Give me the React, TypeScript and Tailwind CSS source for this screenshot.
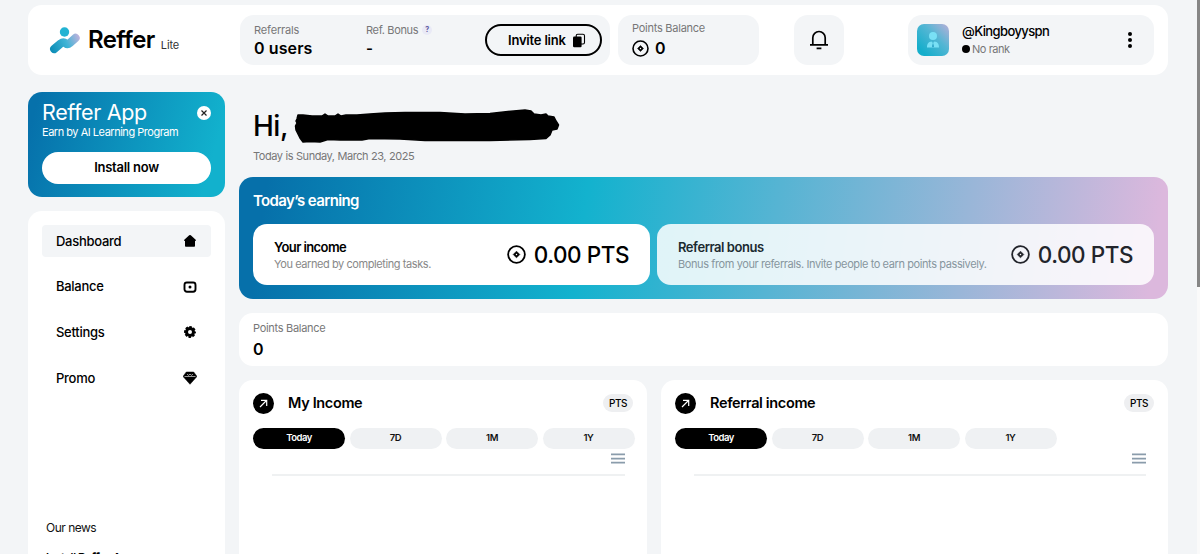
import React from 'react';

const menu = [
    { label: 'Dashboard', icon: 'home', active: true },
    { label: 'Balance', icon: 'balance', active: false },
    { label: 'Settings', icon: 'gear', active: false },
    { label: 'Promo', icon: 'gem', active: false },
];

const periods = ['Today', '7D', '1M', '1Y'];

function Logo() {
    return (
        <svg width="32" height="28" viewBox="0 0 32 28" fill="none">
            <defs>
                <linearGradient id="logo" x1="2" y1="22" x2="31" y2="8" gradientUnits="userSpaceOnUse">
                    <stop stopColor="#0f8fb8" />
                    <stop offset="0.5" stopColor="#3fb4d6" />
                    <stop offset="1" stopColor="#cdb2dd" />
                </linearGradient>
            </defs>
            <circle cx="15.500" cy="6" r="4.700" fill="#22b3d3" />
            <path d="M5.200 23l6.600-5.600c2-1.600 3.600-1.200 5 0 1.300 1 2.700.8 4.200-.5l5.600-5" stroke="url(#logo)" strokeWidth="8.200" strokeLinecap="round" strokeLinejoin="round" />
        </svg>
    );
}

function Coin({ size }: { size: number }) {
    return (
        <svg width={size} height={size} viewBox="0 0 20 20" fill="none" className="shrink-0">
            <circle cx="10" cy="10" r="8.800" stroke="currentColor" strokeWidth="1.900" />
            <path d="M10 6.500l3.500 3.500-3.500 3.500L6.500 10z" fill="currentColor" stroke="currentColor" strokeWidth="0.600" strokeLinejoin="round" />
            <circle cx="10" cy="10" r="0.800" fill="#fff" />
        </svg>
    );
}

function MenuIcon({ name }: { name: string }) {
    if (name === 'home') {
        return (
            <svg className="-mt-px" width="14" height="14" viewBox="0 0 14 14">
                <path d="M6.200 1.300a1.200 1.200 0 0 1 1.600 0l4.900 4.500c.5.500.2 1.200-.4 1.200H12v4.900c0 .5-.3.800-.8.800H2.800c-.5 0-.8-.3-.8-.8V7h-.3c-.6 0-.9-.7-.4-1.200z" />
            </svg>
        );
    }
    if (name === 'balance') {
        return (
            <svg width="14" height="14" viewBox="0 0 14 14" fill="none">
                <rect x="1.500" y="2.500" width="11" height="9.200" rx="2.400" stroke="#000" strokeWidth="1.900" />
                <circle cx="7" cy="7.100" r="1.500" fill="#000" />
            </svg>
        );
    }
    if (name === 'gear') {
        return (
            <svg className="-mt-px" width="14" height="14" viewBox="0 0 14 14" fill="none">
                <circle cx="7" cy="7" r="3.500" stroke="#000" strokeWidth="3" />
                <circle cx="7" cy="7" r="5" stroke="#000" strokeWidth="1.900" strokeDasharray="2.500 1.427" strokeDashoffset="1.250" />
            </svg>
        );
    }
    return (
        <svg className="-mt-px" width="14" height="14" viewBox="0 0 14 14" fill="none">
            <path d="M3.300 1h7.400L14 5.400 7 13.300 0 5.400z" fill="#000" stroke="#000" strokeWidth="0.500" strokeLinejoin="round" />
            <path d="M1.500 5.500h11M4 3.200l1.700 1.200L7 3l1.300 1.400L10 3.200" stroke="#fff" strokeWidth="0.600" />
        </svg>
    );
}

function ChartCard({ title, className }: { title: string; className: string }) {
    return (
        <div className={`h-[190px] rounded-t-[14px] bg-white px-[14px] pt-3 ${className}`}>
            <div className="flex h-[22px] items-center">
                <div className="flex size-[21px] items-center justify-center rounded-full bg-black">
                    <svg width="9" height="9" viewBox="0 0 9 9" fill="none" stroke="#fff" strokeWidth="1.200">
                        <path d="M1 8l6.500-6.500M2 1.300h5.700V7" />
                    </svg>
                </div>
                <h3 className="ml-[14px] text-[14.500px] font-semibold leading-[20px] tracking-[-0.350px]">{title}</h3>
                <span className="ml-auto flex h-[18px] w-[30px] items-center justify-center rounded-full bg-[#eeeff1] text-[10px] font-medium tracking-[-0.500px]">PTS</span>
            </div>
            <div className="mt-[13.500px] flex gap-[4.500px]">
                {periods.map((p, i) => (
                    <button
                        key={p}
                        className={`h-[21px] w-[92px] shrink-0 rounded-full text-[9.500px] font-semibold tracking-[-0.500px] ${i === 0 ? 'bg-black text-white' : 'bg-[#eff1f3] text-[#111]'}`}
                    >
                        {p}
                    </button>
                ))}
            </div>
            <div className="mt-[4.500px] flex justify-end pr-2">
                <svg width="14" height="11" viewBox="0 0 14 11" fill="#8a9cab">
                    <path d="M0 .5h14v1.700H0zM0 4.700h14v1.700H0zM0 8.800h14v1.700H0z" />
                </svg>
            </div>
            <div className="ml-[19px] mr-2 mt-[10px] h-[2px] bg-[#eff1f2]"></div>
        </div>
    );
}

export default function App() {
    return (
        <div className="flex h-[554px] w-[1200px] overflow-hidden bg-[#f3f5f7] font-['Inter',sans-serif] text-black">
            <div className="w-[1168px] shrink-0 pl-7 pt-[5px]">
                {/* Top bar */}
                <header className="flex h-[70px] items-center rounded-[14px] bg-white pr-[14px]">
                    <div className="flex w-[212px] items-center pl-[21px]">
                        <Logo />
                        <span className="ml-[7px] text-[24px] font-semibold leading-none tracking-[-0.600px]">Reffer</span>
                        <span className="ml-[6px] mt-[11px] text-[11px] leading-none tracking-[-0.100px] text-[#333]">Lite</span>
                    </div>

                    <div className="flex h-[50px] w-[370px] items-center rounded-[14px] bg-[#f3f5f7] pl-[14px] pr-2">
                        <div className="-mt-[2px] w-[112px]">
                            <p className="text-[11px] leading-[18px] tracking-[-0.150px] text-[#777]">Referrals</p>
                            <p className="text-[16px] font-semibold leading-[19px] tracking-[0.100px]">0 users</p>
                        </div>
                        <div className="-mt-[2px]">
                            <p className="flex items-center text-[11px] leading-[18px] tracking-[-0.350px] text-[#777]">
                                Ref. Bonus
                                <span className="ml-[4px] flex size-[10px] items-center justify-center rounded-full bg-[#e9eaf6] text-[7px] font-bold text-[#5b559c]">?</span>
                            </p>
                            <p className="text-[15px] font-semibold leading-[19px]">-</p>
                        </div>
                        <button className="ml-auto flex h-8 w-[117px] items-center rounded-full border-2 border-black pl-[21px] text-[13px] font-semibold tracking-[-0.200px]">
                            <span className="pt-px">Invite link</span>
                            <svg className="ml-[6px]" width="14" height="15" viewBox="0 0 14 15">
                                <rect x="4.200" y="1.200" width="8.300" height="9.800" rx="1.500" fill="none" stroke="#000" strokeWidth="1.100" />
                                <rect x="1" y="3.600" width="8.600" height="10.600" rx="1.200" />
                            </svg>
                        </button>
                    </div>

                    <div className="ml-2 h-[50px] w-[141px] rounded-[14px] bg-[#f3f5f7] pl-[14px] pt-1">
                        <p className="text-[11px] leading-[18px] tracking-[-0.250px] text-[#777]">Points Balance</p>
                        <p className="flex items-center gap-[6px] text-[16px] font-semibold leading-[22px]">
                            <Coin size={17} />0
                        </p>
                    </div>

                    <div className="ml-[35px] flex size-[50px] items-center justify-center rounded-[14px] bg-[#f3f5f7]">
                        <svg width="20" height="22" viewBox="0 0 20 22" fill="none" stroke="#000" strokeWidth="1.700">
                            <path d="M1 15.800h18M3.800 15.800V8.700a6.200 6.200 0 0 1 12.400 0v7.100M7.600 19.400h4.800" />
                        </svg>
                    </div>

                    <div className="ml-auto flex h-[50px] w-[246px] items-center rounded-[14px] bg-[#f3f5f7] pl-[9px] pr-[21px]">
                        <div className="flex size-8 items-center justify-center rounded-[7px] bg-[linear-gradient(45deg,#14aecb_15%,#55b6d4_60%,#b9afd8)]">
                            <svg width="14" height="18" viewBox="0 0 14 18" fill="#79e0f5">
                                <circle cx="7" cy="5" r="4" />
                                <path d="M1 16.500c0-4 1.500-5.500 4.500-6L7 12l1.500-1.500c3 .5 4.500 2 4.500 6z" />
                                <path d="M7 11.500l1 4-1 1-1-1z" fill="#2a9fc4" />
                            </svg>
                        </div>
                        <div className="ml-[13px]">
                            <p className="text-[13px] font-medium leading-[18px] tracking-[-0.600px]">@Kingboyyspn</p>
                            <p className="flex items-center text-[11px] leading-[18px] tracking-[-0.450px] text-[#777]">
                                <span className="mr-[2px] size-[8px] rounded-full bg-black"></span>No rank
                            </p>
                        </div>
                        <svg className="ml-auto" width="6" height="18" viewBox="0 0 6 18">
                            <circle cx="3" cy="3" r="2" />
                            <circle cx="3" cy="9" r="2" />
                            <circle cx="3" cy="15" r="2" />
                        </svg>
                    </div>
                </header>

                <div className="flex gap-[14px]">
                    {/* Sidebar */}
                    <aside className="w-[197px] shrink-0 pt-[17px]">
                        <div className="h-[105px] rounded-[14px] bg-[linear-gradient(105deg,#0671ab_5%,#12b1cd_90%)] px-[14px] pt-[7px] text-white">
                            <div className="flex items-center justify-between">
                                <h2 className="text-[21.500px] leading-[26px] tracking-[-0.350px]">Reffer App</h2>
                                <span className="mt-[2px] flex size-[14px] items-center justify-center rounded-full bg-white">
                                    <svg width="6" height="6" viewBox="0 0 6 6" stroke="#222" strokeWidth="1.200">
                                        <path d="M.5.5l5 5M5.500.5l-5 5" />
                                    </svg>
                                </span>
                            </div>
                            <p className="text-[11px] leading-[14px] tracking-[-0.480px]">Earn by AI Learning Program</p>
                            <button className="mt-[13px] h-8 w-full rounded-full bg-white text-[13px] font-semibold tracking-[-0.250px] text-black">Install now</button>
                        </div>

                        <div className="mt-[14px] h-[360px] rounded-t-[14px] bg-white px-[14px] pt-[14px]">
                            <nav className="flex flex-col gap-[13.700px]">
                                {menu.map(m => (
                                    <a key={m.label} className={`flex h-8 items-center justify-between rounded-[4px] px-[14px] pt-px text-[13px] font-medium tracking-[-0.280px] ${m.active ? 'bg-[#f3f5f7]' : ''}`}>
                                        {m.label}
                                        <MenuIcon name={m.icon} />
                                    </a>
                                ))}
                            </nav>
                            <div className="pl-[4px] pt-[125px]">
                                <p className="text-[12px] leading-[18px] tracking-[-0.500px] text-[#111]">Our news</p>
                                <p className="mt-[11px] text-[11px] font-semibold leading-[18px] tracking-[-0.300px]">
                                    Install <b>Reffer</b> App
                                </p>
                            </div>
                        </div>
                    </aside>

                    {/* Content */}
                    <main className="w-[929px] shrink-0">
                        <div className="h-[102px] pl-[14px] pt-[33px]">
                            <div className="flex h-[36px] items-center">
                                <h1 className="w-[41px] text-[28px] font-medium leading-[36px] tracking-[-0.500px]">Hi,</h1>
                                <svg width="266" height="36" viewBox="294 109 266 36">
                                    <path
                                        d="M297 120L298 116L303 116L312 117L322 117L325 115L328 117L335 117L338 115L341 117L346 116L357 116L370 115L385 114L405 113.500L440 113.500L465 115L490 114.500L508 112.500L525 111L531 112L534 115L541 116L546 115L548 117L554 118L556 122L558.500 126L557 130L552 131L550 136L546 139.500L530 140.500L490 141.500L425 141.500L400 140L370 139.500L362 141L352 141L340 141L328 140.500L320 143L310 142.500L303 143L300 139L298 135L296 131L295.500 127L297 124L296 122Z"
                                        fill="#000"
                                        stroke="#000"
                                        strokeWidth="1.500"
                                        strokeLinejoin="round"
                                    />
                                </svg>
                            </div>
                            <p className="mt-[3px] text-[11px] leading-[18px] tracking-[-0.450px] text-[#777] [word-spacing:0.300px]">Today is Sunday, March 23, 2025</p>
                        </div>

                        <section className="h-[122px] rounded-[14px] bg-[linear-gradient(98deg,#0670aa_3%,#13b2ce_37%,#dcb8dd_98%)] px-[14px] pt-[13px]">
                            <h2 className="text-[15px] font-semibold leading-[22px] tracking-[-0.620px] text-white">Today’s earning</h2>
                            <div className="mt-[12px] flex gap-[7px]">
                                <div className="flex h-[61px] w-[397px] items-center justify-between rounded-[14px] bg-white px-[21px]">
                                    <div className="pt-px">
                                        <p className="text-[13px] font-semibold leading-[18px] tracking-[-0.580px]">Your income</p>
                                        <p className="text-[11px] leading-[17px] tracking-[-0.420px] text-[#888]">You earned by completing tasks.</p>
                                    </div>
                                    <p className="flex items-center gap-[8px] text-[22.500px] font-medium leading-[30px] tracking-[-0.450px]"><Coin size={19} />0.00 PTS</p>
                                </div>
                                <div className="flex h-[61px] w-[497px] items-center justify-between rounded-[14px] bg-white/85 px-[21px]">
                                    <div className="pt-px">
                                        <p className="text-[13px] font-semibold leading-[18px] tracking-[-0.450px] text-[#1b2a30]">Referral bonus</p>
                                        <p className="text-[11px] leading-[17px] tracking-[-0.400px] text-[#87969e]">Bonus from your referrals. Invite people to earn points passively.</p>
                                    </div>
                                    <p className="flex items-center gap-[8px] text-[22.500px] font-medium leading-[30px] tracking-[-0.450px] text-[#22242b]"><Coin size={19} />0.00 PTS</p>
                                </div>
                            </div>
                        </section>

                        <section className="mt-[14px] h-[53px] rounded-[14px] bg-white pl-[14px] pt-[6px]">
                            <p className="text-[11px] leading-[18px] tracking-[-0.300px] text-[#777]">Points Balance</p>
                            <p className="text-[16px] font-semibold leading-[24px]">0</p>
                        </section>

                        <div className="mt-[14px] flex gap-[14px]">
                            <ChartCard title="My Income" className="w-[408px]" />
                            <ChartCard title="Referral income" className="w-[507px]" />
                        </div>
                    </main>
                </div>
            </div>

            {/* Page scrollbar */}
            <div className="ml-auto h-full w-[3px] bg-[#fafafa]">
                <div className="h-[287px] bg-[#868686]"></div>
            </div>
        </div>
    );
}
